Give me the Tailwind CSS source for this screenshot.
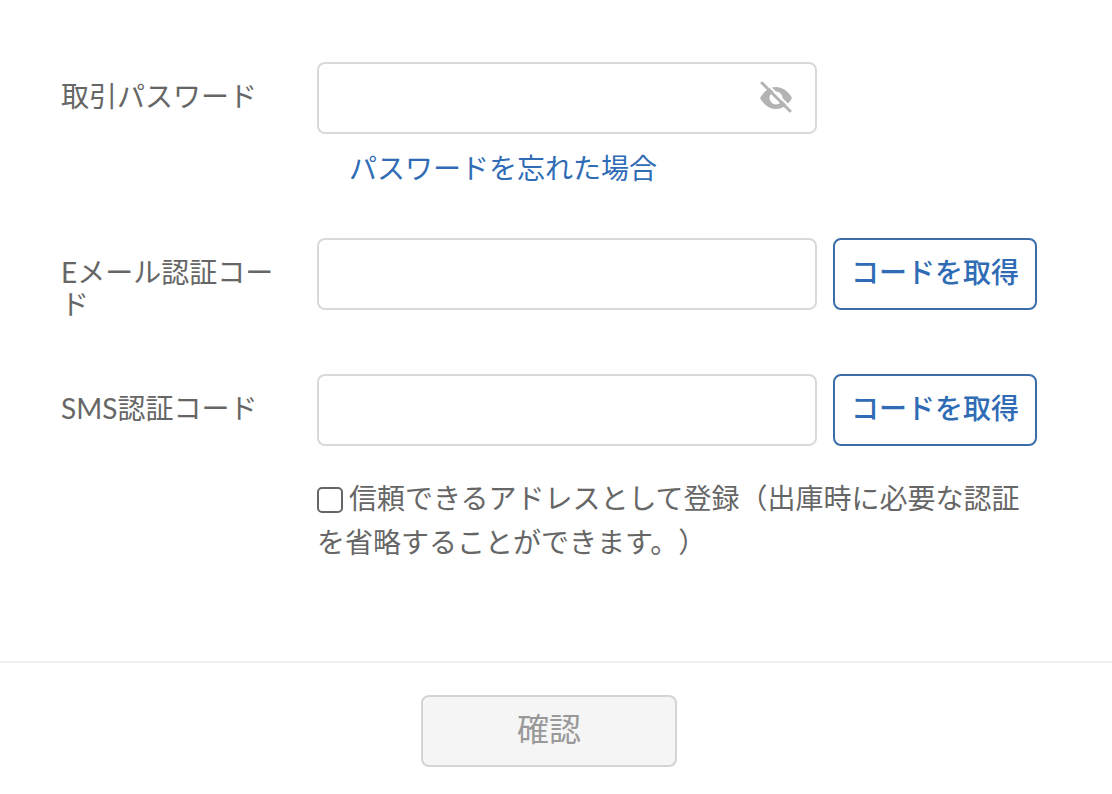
<!DOCTYPE html>
<html lang="ja">
<head>
    <meta charset="UTF-8" />
    <title>取引パスワード</title>
    <script src="https://cdn.jsdelivr.net/npm/@tailwindcss/browser@4"></script>
</head>
<body class="bg-white font-['Lato','Noto_Sans_CJK_JP',sans-serif] text-[28px] text-[#666666]">
    <div class="w-[1112px] h-[794px] overflow-hidden flex flex-col">
        <!-- form -->
        <div class="h-[661px] pt-[62px] pl-[61px] flex flex-col">
            <!-- trade password -->
            <div class="flex">
                <label class="w-[256px] shrink-0 pr-[40px] pt-[18px] leading-[32px]">取引パスワード</label>
                <div class="flex flex-col">
                    <div class="w-[500px] h-[72px] border-2 border-[#d9d9d9] rounded-[8px] flex items-center justify-end pr-[21px]">
                        <svg class="w-[36px] h-[36px] text-[#b3b3b3]" viewBox="0 0 36 36" fill="none">
                            <path fill="currentColor" d="M2 18c3-6 9-11 16-11s13 5 16 11c-3 6-9 11-16 11S5 24 2 18zm16-6.500a6.500 6.500 0 1 0 0 13 6.500 6.500 0 0 0 0-13z"/>
                            <path stroke="currentColor" stroke-width="3" stroke-linecap="round" d="M4 3l28 28"/>
                            <path stroke="white" stroke-width="2" d="M7 2l27 27"/>
                        </svg>
                    </div>
                    <a class="pl-[32px] mt-[16px] leading-[36px] text-[#2f6cb5]">パスワードを忘れた場合</a>
                </div>
            </div>
            <!-- email code -->
            <div class="flex mt-[52px]">
                <label class="w-[256px] shrink-0 pr-[40px] pt-[18px] leading-[32px]">Eメール認証コード</label>
                <div class="w-[500px] h-[72px] border-2 border-[#d9d9d9] rounded-[8px]"></div>
                <button class="ml-[16px] w-[204px] h-[72px] pb-[4px] border-2 border-[#3b6ea8] rounded-[8px] text-[#2f6cb5] font-medium">コードを取得</button>
            </div>
            <!-- sms code -->
            <div class="flex mt-[54px]">
                <label class="w-[256px] shrink-0 pr-[40px] pt-[18px] leading-[32px]">SMS認証コード</label>
                <div class="w-[500px] h-[72px] border-2 border-[#d9d9d9] rounded-[8px]"></div>
                <button class="ml-[16px] w-[204px] h-[72px] pb-[4px] border-2 border-[#3b6ea8] rounded-[8px] text-[#2f6cb5] font-medium">コードを取得</button>
            </div>
            <!-- trusted address -->
            <div class="ml-[256px] mt-[30px] w-[710px] leading-[44px] [text-spacing-trim:space-all]">
                <span class="inline-block align-[-4px] w-[26px] h-[26px] border-2 border-[#666666] rounded-[5px] mr-[6px]"></span>信頼できるアドレスとして登録（出庫時に必要な認証を省略することができます。）
            </div>
        </div>
        <!-- footer -->
        <div class="border-t-2 border-[#f0f0f0] pt-[32px] pr-[14px] flex justify-center">
            <button class="w-[256px] h-[72px] pb-[4px] bg-[#f5f5f5] border-2 border-[#d4d4d4] rounded-[8px] text-[32px] text-[#999999]">確認</button>
        </div>
    </div>
</body>
</html>
